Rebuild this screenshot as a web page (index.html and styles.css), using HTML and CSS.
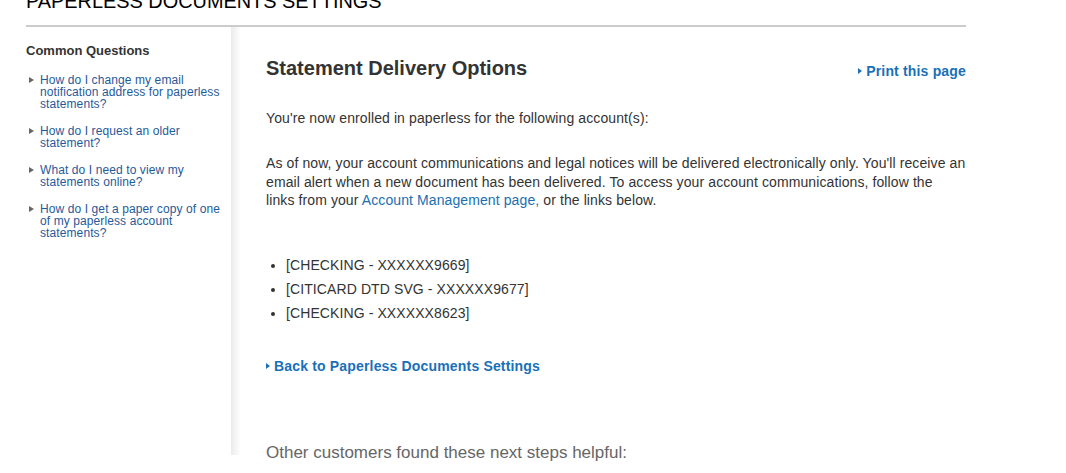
FILE: index.html
```html
<!DOCTYPE html>
<html>
<head>
<meta charset="utf-8">
<link rel="stylesheet" href="styles.css">
</head>
<body>
<div class="page">
  <h1 class="page-title">PAPERLESS DOCUMENTS SETTINGS</h1>
  <div class="layout">
    <aside class="sidebar">
      <h2 class="side-title">Common Questions</h2>
      <ul class="faq">
        <li><a href="#">How do I change my email notification address for paperless statements?</a></li>
        <li><a href="#">How do I request an older statement?</a></li>
        <li><a href="#">What do I need to view my statements online?</a></li>
        <li><a href="#">How do I get a paper copy of one of my paperless account statements?</a></li>
      </ul>
    </aside>
    <div class="shadow"></div>
    <main class="main">
      <div class="main-head">
        <h2 class="main-title">Statement Delivery Options</h2>
        <a class="arrow-link print" href="#">Print this page</a>
      </div>
      <p class="intro">You're now enrolled in paperless for the following account(s):</p>
      <p class="body-text">As of now, your account communications and legal notices will be delivered electronically only. You'll receive an email alert when a new document has been delivered. To access your account communications, follow the<br>links from your <a href="#" class="inline-link">Account Management page,</a> or the links below.</p>
      <ul class="accounts">
        <li>[CHECKING - XXXXXX9669]</li>
        <li>[CITICARD DTD SVG - XXXXXX9677]</li>
        <li>[CHECKING - XXXXXX8623]</li>
      </ul>
      <a class="arrow-link back" href="#">Back to Paperless Documents Settings</a>
      <p class="helpful">Other customers found these next steps helpful:</p>
    </main>
  </div>
</div>
</body>
</html>
```
FILE: styles.css
```css
* { box-sizing: border-box; }
html, body { margin: 0; padding: 0; background: #fff; }
body { font-family: "Liberation Sans", Arial, sans-serif; color: #333; overflow: hidden; height: 473px; }
a { text-decoration: none; }
.page { width: 966px; padding-left: 26px; }
.page-title {
  margin: -11px 0 0 0;
  padding-bottom: 12px;
  font-size: 19.9px;
  font-weight: normal;
  color: #000;
  line-height: 24px;
  border-bottom: 2px solid #cccccc;
}
.layout { display: flex; align-items: stretch; height: 428px; }
.sidebar { width: 205px; flex: none; padding-top: 16px; }
.side-title { margin: 0 0 15px 0; font-size: 13px; font-weight: bold; color: #333; line-height: 16px; }
.faq { list-style: none; margin: 0; padding: 0; }
.faq li { position: relative; padding-left: 14px; padding-right: 2px; margin-bottom: 15px; font-size: 12px; line-height: 12px; letter-spacing: 0.1px; }
.faq li::before {
  content: ""; position: absolute; left: 3px; top: 3px;
  border-left: 5px solid #666; border-top: 3px solid transparent; border-bottom: 3px solid transparent;
}
.faq a { color: #1f5a9a; }
.shadow { width: 10px; flex: none; background: linear-gradient(to right, #ebebeb, #fbfbfb 80%, #fff); }
.main { flex: 1; padding-left: 25px; padding-top: 29px; }
.main-head { display: flex; justify-content: space-between; align-items: flex-start; }
.main-title { margin: 0; font-size: 20px; font-weight: bold; color: #333; line-height: 24px; }
.arrow-link { position: relative; display: inline-block; padding-left: 8px; color: #1a70b8; font-weight: bold; font-size: 14px; line-height: 16px; letter-spacing: 0.17px; }
.arrow-link::before {
  content: ""; position: absolute; left: 0; top: 5px;
  border-left: 4px solid #1a70b8; border-top: 3.5px solid transparent; border-bottom: 3.5px solid transparent;
}
.print { margin-top: 7px; }
.intro { margin: 29px 0 0 0; font-size: 14px; line-height: 18px; letter-spacing: 0.1px; }
.body-text { margin: 27px 0 0 0; max-width: 700px; font-size: 14px; line-height: 18.5px; letter-spacing: 0.1px; }
.inline-link { color: #1a6fb0; }
.accounts { margin: 43px 0 0 0; padding-left: 20px; font-size: 14px; line-height: 24px; letter-spacing: 0.1px; }
.back { margin-top: 33px; }
.helpful { margin: 68px 0 0 0; font-size: 17px; color: #666; line-height: 20px; }
```
